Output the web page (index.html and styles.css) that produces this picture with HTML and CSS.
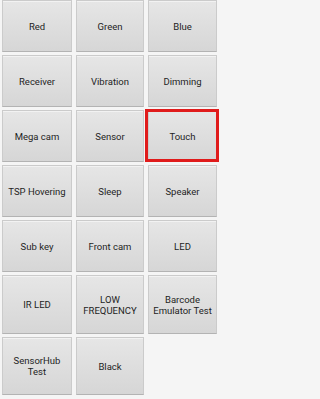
FILE: index.html
```html
<!DOCTYPE html>
<html>
<head>
<meta charset="utf-8">
<link rel="stylesheet" href="styles.css">
</head>
<body>
<div class="grid">
  <div class="btn"><span>Red</span></div>
  <div class="btn"><span>Green</span></div>
  <div class="btn"><span>Blue</span></div>
  <div class="btn"><span>Receiver</span></div>
  <div class="btn"><span>Vibration</span></div>
  <div class="btn"><span>Dimming</span></div>
  <div class="btn"><span>Mega cam</span></div>
  <div class="btn"><span>Sensor</span></div>
  <div class="btn selected"><span>Touch</span><i class="mark"></i></div>
  <div class="btn"><span>TSP Hovering</span></div>
  <div class="btn"><span>Sleep</span></div>
  <div class="btn"><span>Speaker</span></div>
  <div class="btn"><span>Sub key</span></div>
  <div class="btn"><span>Front cam</span></div>
  <div class="btn"><span>LED</span></div>
  <div class="btn"><span>IR LED</span></div>
  <div class="btn"><span>LOW<br>FREQUENCY</span></div>
  <div class="btn"><span>Barcode<br>Emulator Test</span></div>
  <div class="btn"><span>SensorHub<br>Test</span></div>
  <div class="btn"><span>Black</span></div>
</div>
</body>
</html>
```
FILE: styles.css
```css
html, body {
  margin: 0;
  padding: 0;
  background: #f5f5f5;
}
body {
  width: 222px;
  height: 399px;
  overflow: hidden;
}
.grid {
  display: grid;
  grid-template-columns: 70px 68px 69px;
  grid-template-rows: repeat(5, 52px) 59px 58px;
  column-gap: 4px;
  row-gap: 3px;
  padding-left: 2px;
}
.btn {
  position: relative;
  box-sizing: border-box;
  display: flex;
  align-items: center;
  justify-content: center;
  text-align: center;
  background: linear-gradient(#e6e6e6, #d6d6d6);
  border: 1px solid #cbcbcb;
  border-bottom-color: #b3b3b3;
  box-shadow: inset 0 1px 0 #f2f2f2;
  font-family: Roboto, "Liberation Sans", sans-serif;
  font-size: 9.5px;
  line-height: 11px;
  color: #1e1e1e;
}
.mark {
  position: absolute;
  left: -4px;
  right: -3px;
  top: -2px;
  bottom: -1px;
  border: 3px solid #e01b1b;
}
```
